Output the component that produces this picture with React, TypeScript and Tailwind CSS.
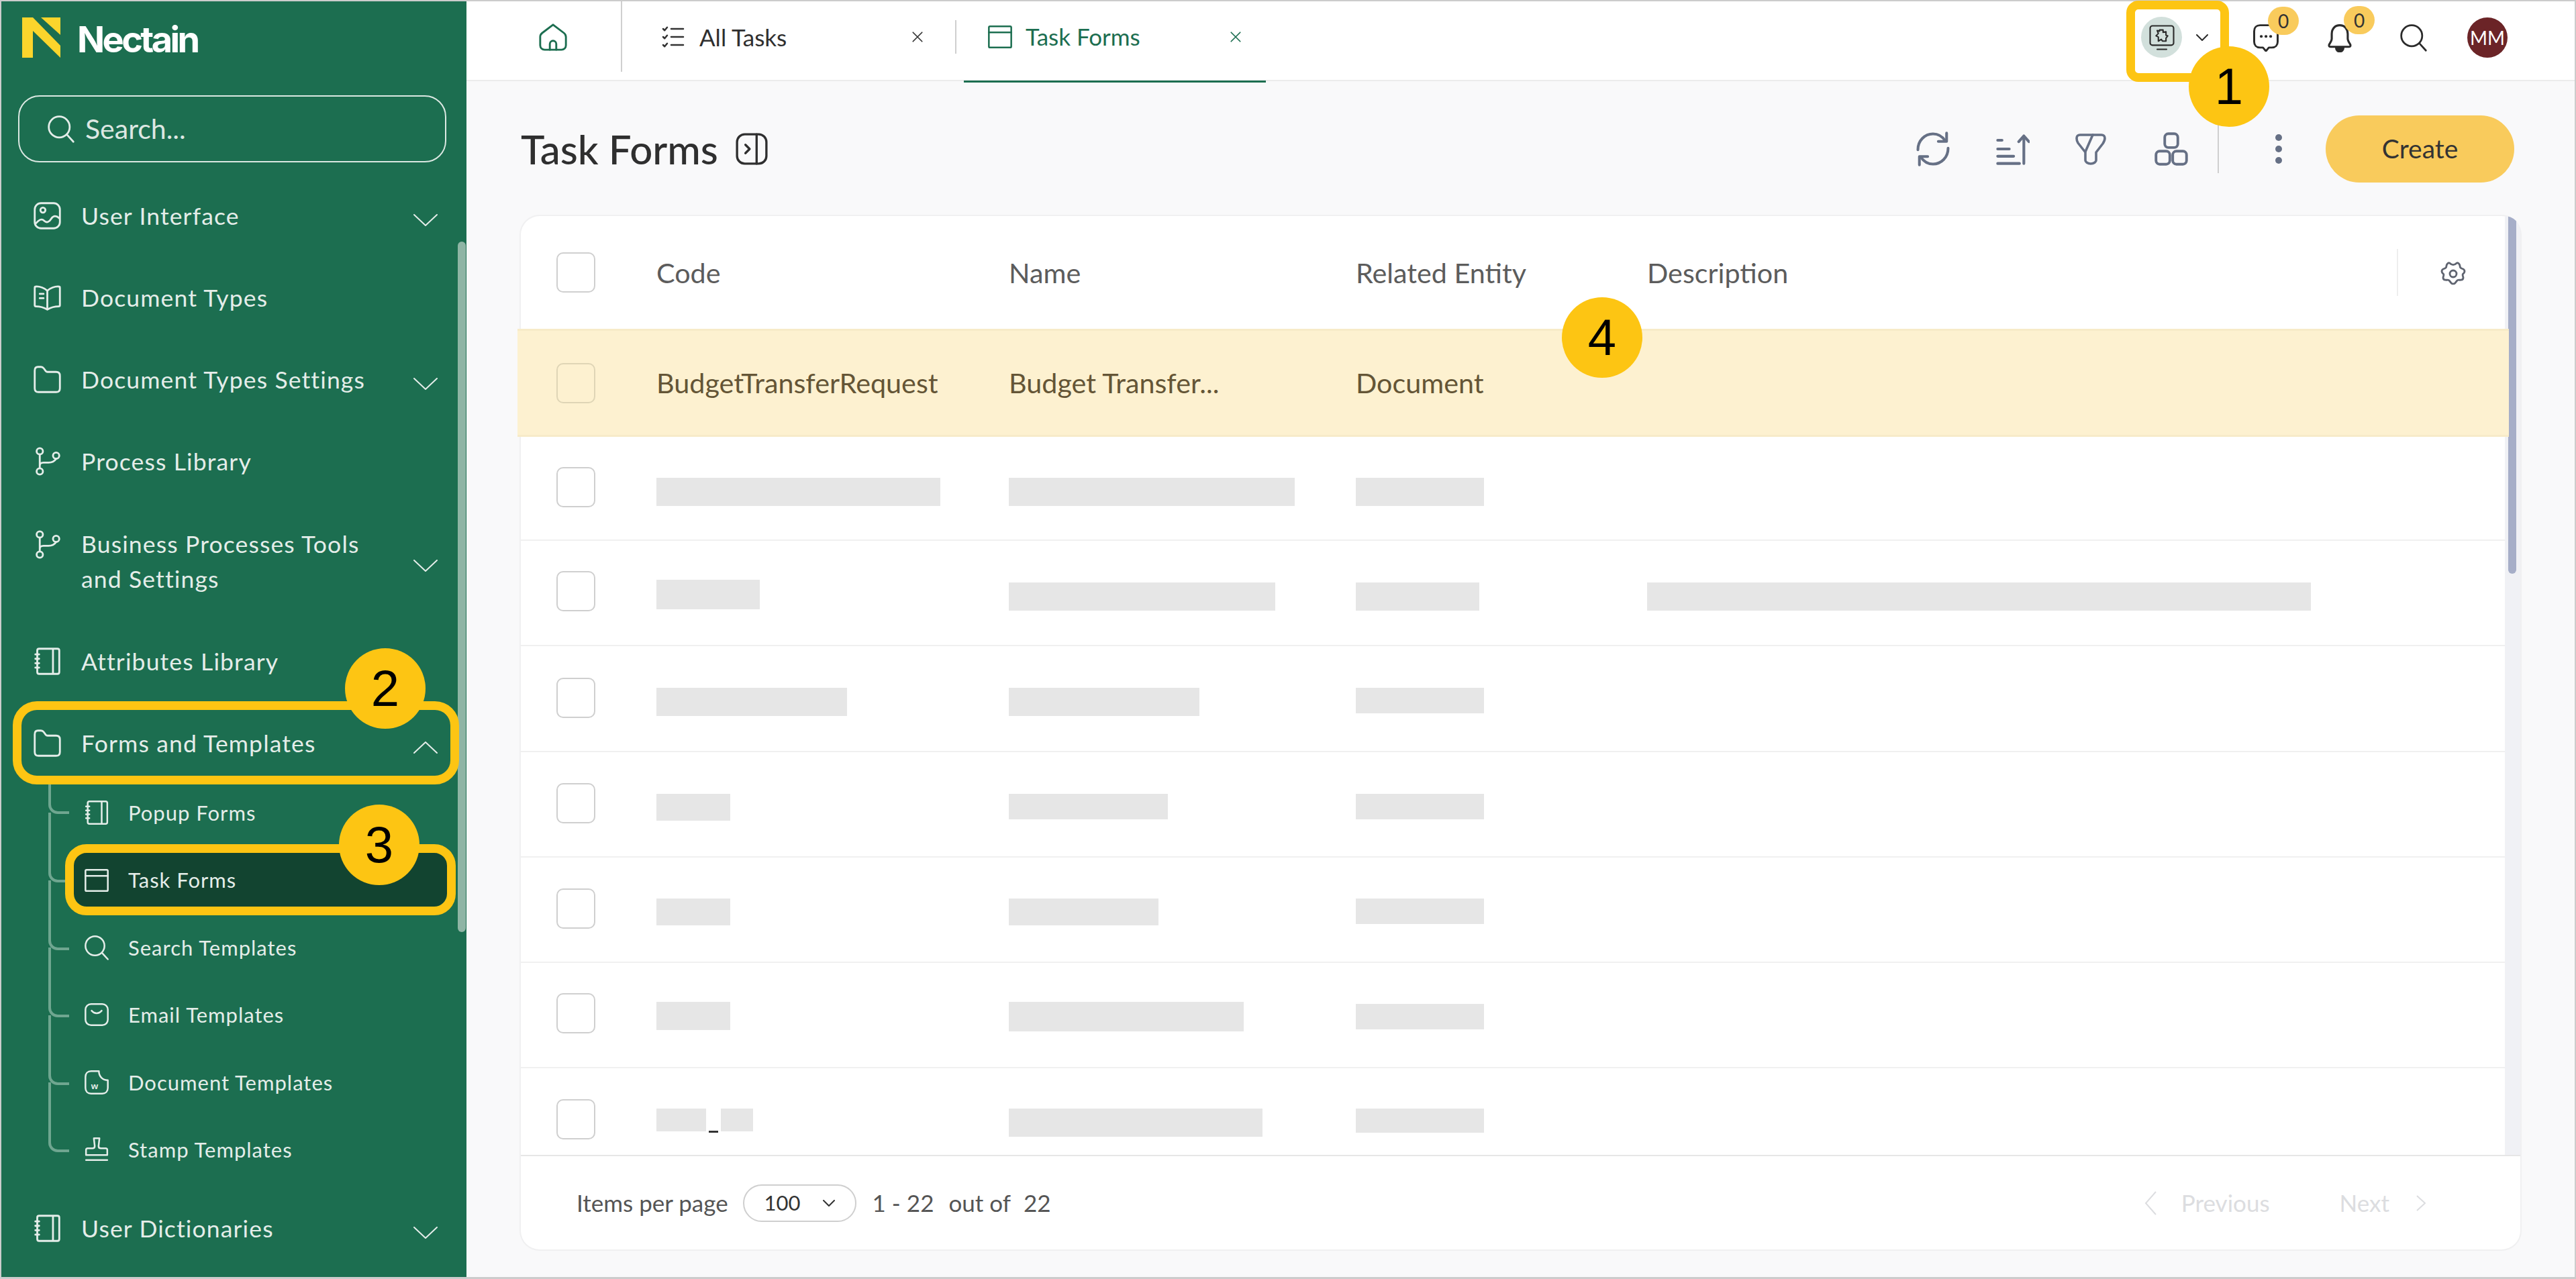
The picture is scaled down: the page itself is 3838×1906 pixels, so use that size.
import type { ReactNode } from "react";

type IconProps = { className?: string };

function Svg({ className, children, sw = 1.5, vb = "0 0 24 24" }: IconProps & { children: ReactNode; sw?: number; vb?: string }) {
  return (
    <svg viewBox={vb} fill="none" stroke="currentColor" strokeWidth={sw} strokeLinecap="round" strokeLinejoin="round" className={className}>
      {children}
    </svg>
  );
}

const ImageIcon = (p: IconProps) => (
  <Svg {...p}>
    <rect x="2" y="2" width="20" height="20" rx="5" />
    <circle cx="8.5" cy="7.5" r="2" />
    <path d="M2.5 18.5c3-3.5 5-4.5 7-2.5s4 1 5.500-1.500 4-3 6.500-.5" />
  </Svg>
);
const BookIcon = (p: IconProps) => (
  <Svg {...p}>
    <path d="M12 21.500V6.500C10 4.500 6 3 3 3.200c-.6 0-1 .5-1 1V18c0 .6.4 1 1 1 3.500 0 6.500 1 9 2.500 2.500-1.500 5.500-2.500 9-2.500.6 0 1-.4 1-1V4.200c0-.5-.4-1-1-1C18 3 14 4.500 12 6.500" />
    <path d="M6 9h3M6 12.500h3" />
  </Svg>
);
const FolderIcon = (p: IconProps) => (
  <Svg {...p}>
    <path d="M2 5c0-2 1-3 2.500-3H7c1 0 1.600.4 2.200 1.200l1.500 2.100c.4.500.8.700 1.500.700H19c2 0 3 1 3 3v10c0 2-1 3-3 3H5c-2 0-3-1-3-3V5Z" />
  </Svg>
);
const BranchIcon = (p: IconProps) => (
  <Svg {...p}>
    <circle cx="6" cy="4" r="2.500" />
    <circle cx="19" cy="7.500" r="2.500" />
    <circle cx="6" cy="20" r="2.500" />
    <path d="M6 6.500v11M6 15.500c0-2 1-2.500 3-2.500h4c3 0 5-1.500 6-3" />
  </Svg>
);
const NotebookIcon = (p: IconProps) => (
  <Svg {...p}>
    <path d="M4 3.500C4 2.500 4.600 2 5.500 2H20c1 0 1.500.5 1.500 1.500v17c0 1-.5 1.500-1.500 1.500H5.500C4.600 22 4 21.500 4 20.500V3.500ZM16.500 2v20" />
    <path d="M2.500 6.500h3M2.500 10h3M2.500 13.500h3M2.500 17h3" />
  </Svg>
);
const WindowIcon = (p: IconProps) => (
  <Svg {...p}>
    <rect x="2" y="2.500" width="20" height="19" rx="1" />
    <path d="M2 8h20" />
  </Svg>
);
const SearchIcon = (p: IconProps) => (
  <Svg {...p}>
    <circle cx="10.500" cy="10.500" r="8.500" />
    <path d="m17 17 5 5.500" />
  </Svg>
);
const MailIcon = (p: IconProps) => (
  <Svg {...p}>
    <rect x="2" y="2.500" width="20" height="19" rx="5" />
    <path d="M7.500 8.500c2.500 3 6.500 3 9 0" />
  </Svg>
);
const DocWIcon = (p: IconProps) => (
  <Svg {...p}>
    <path d="M14 2H7C4 2 2 4 2 7v10c0 3 2 5 5 5h10c3 0 5-2 5-5v-7c-4.500 0-8-3-8-8Z" />
    <text x="7" y="18" fontSize="8" fontWeight="700" fontFamily="Liberation Sans, sans-serif" fill="currentColor" stroke="none">w</text>
  </Svg>
);
const StampIcon = (p: IconProps) => (
  <Svg {...p}>
    <path d="M9.500 2h5l-.8 7c0 1.500 1 2 2 2H20c1 0 1.500.5 1.500 1.500V17h-19v-4.500c0-1 .5-1.500 1.500-1.500h4.300c1 0 2-.5 2-2l-.8-7Z" />
    <path d="M2.500 21.500h19" />
  </Svg>
);
const ChevronDown = (p: IconProps) => (
  <Svg {...p} vb="0 0 36 18" sw={2}>
    <path d="m1 1 17 16L35 1" />
  </Svg>
);
const ChevronUp = (p: IconProps) => (
  <Svg {...p} vb="0 0 36 18" sw={2}>
    <path d="m1 17 17-16 17 16" />
  </Svg>
);
const SmallChevron = (p: IconProps) => (
  <Svg {...p} vb="0 0 18 10" sw={2}>
    <path d="m1 1 8 8 8-8" />
  </Svg>
);
const HomeIcon = (p: IconProps) => (
  <Svg {...p}>
    <path d="M12 2.500 3.500 9C2.500 9.800 2 10.600 2 12v6.500C2 20.500 3.500 22 5.500 22h13c2 0 3.500-1.500 3.500-3.500V12c0-1.400-.5-2.200-1.500-3L12 2.500Z" />
    <path d="M9.500 22v-4.500a2.500 2.500 0 0 1 5 0V22" />
  </Svg>
);
const TasksIcon = (p: IconProps) => (
  <Svg {...p} sw={1.7}>
    <path d="m2 4 1.500 1.500L6 2.500M2 12l1.500 1.500L6 10.500M2 20l1.500 1.500L6 18.500" />
    <path d="M10 4h12M10 12h12M10 20h12" />
  </Svg>
);
const CloseIcon = (p: IconProps) => (
  <Svg {...p} vb="0 0 16 16" sw={1.5}>
    <path d="m2 2 12 12M14 2 2 14" />
  </Svg>
);
const PanelIcon = (p: IconProps) => (
  <Svg {...p} sw={1.6}>
    <rect x="1.500" y="1.500" width="21" height="21" rx="5.500" />
    <path d="M15.500 1.500v21M7.500 9l3 3-3 3" />
  </Svg>
);
const ChatIcon = (p: IconProps) => (
  <Svg {...p} sw={1.7}>
    <path d="M7 1.500h10c3 0 5 2 5 5v9c0 3-2 5-5 5h-2.500L12 23.500 9.500 20.500H7c-3 0-5-2-5-5v-9c0-3 2-5 5-5Z" />
    <path d="M8 11h.1M12 11h.1M16 11h.1" strokeWidth={2.400} />
  </Svg>
);
const BellIcon = (p: IconProps) => (
  <Svg {...p} sw={1.7}>
    <path d="M12 2C8 2 5.500 5 5.500 9v4c0 1.500-1 3-2 4.500-.6 1-.2 2 1 2h15c1.200 0 1.600-1 1-2-1-1.500-2-3-2-4.500V9c0-4-2.500-7-6.500-7Z" />
    <path d="M9 20c0 2 1.300 3.300 3 3.300s3-1.300 3-3.300" fill="currentColor" />
  </Svg>
);
const MonitorIcon = (p: IconProps) => (
  <Svg {...p} sw={1.2}>
    <rect x="2" y="2" width="20" height="16.500" rx="2" />
    <path d="M8 22h8" />
    <path d="M10 5.500h3v2l2.500-.5v3l1.500.5-1.500 2v2.500h-3l-1-1.500-2.500 1.500v-3.500l-2-1 2-2-1-2.500 2 .5V5.500Z" />
  </Svg>
);
const RefreshIcon = (p: IconProps) => (
  <Svg {...p} sw={1.8}>
    <path d="M2 12.500C2 6.500 6.500 2 12 2c3.500 0 6 1.500 8 4.500M22 11.500C22 17.500 17.500 22 12 22c-3.500 0-6-1.500-8-4.500" />
    <path d="M21 1.500v5.500h-5.500M3 22.500V17h5.500" />
  </Svg>
);
const SortIcon = (p: IconProps) => (
  <Svg {...p} sw={1.900}>
    <path d="M2 6h3M2 12h8M2 17h11M2 22h15" />
    <path d="M20 22V3M16.500 7 20 3l3.500 4" />
  </Svg>
);
const FilterIcon = (p: IconProps) => (
  <Svg {...p} sw={1.800}>
    <path d="M4 1.500h16c1.500 0 2.500 1 2.500 2.500 0 1.500-.5 2.500-1.500 4l-5 6.500v6c0 1-1.500 2.500-4 2.500s-4-1.500-4-2.500v-6L2.500 7.500C1.800 6.500 1.500 5.500 1.500 4 1.500 2.500 2.500 1.500 4 1.500Z" />
    <path d="M13.500 1.500 8 14" />
  </Svg>
);
const AppsIcon = (p: IconProps) => (
  <Svg {...p} sw={1.800}>
    <rect x="7.500" y="1.500" width="9" height="9.500" rx="2.500" />
    <rect x="1.500" y="13.500" width="9.500" height="9" rx="2.500" />
    <rect x="13" y="13.500" width="9.500" height="9" rx="2.500" />
  </Svg>
);
const GearIcon = (p: IconProps) => (
  <Svg {...p} sw={1.700}>
    <circle cx="12" cy="12" r="3" />
    <path d="M9 2.500c1 1 2 1.500 3 1.500s2-.5 3-1.500c1-.6 2 .2 2.500 1 .6 1 .5 2 .8 2.800.5.8 1.500 1.200 2.700 1.500 1 .5 1.500 1.700 1 2.800-.4 1-1.200 1.400-1.500 2-.3.7.4 1.800.5 2.800 0 1.500-1 2-2 2.100-1.200.2-2.200-.2-3 .2-1 .5-1.500 2-2.500 2.800-1 .6-2 .6-3 0-1-.8-1.500-2.300-2.500-2.800-.8-.4-1.800 0-3-.2-1-.1-2-.6-2-2.100.1-1 .8-2.100.5-2.800-.3-.6-1.100-1-1.500-2-.5-1.100 0-2.300 1-2.800C4.200 7.500 5.200 7.100 5.700 6.300 6 5.500 5.900 4.500 6.500 3.500c.5-.8 1.500-1.600 2.500-1Z" />
  </Svg>
);

type NavItem = { label: ReactNode; icon: (p: IconProps) => ReactNode; chevron?: "up" | "down"; tall?: boolean };

const topNav: NavItem[] = [
  { label: "User Interface", icon: ImageIcon, chevron: "down" },
  { label: "Document Types", icon: BookIcon },
  { label: "Document Types Settings", icon: FolderIcon, chevron: "down" },
  { label: "Process Library", icon: BranchIcon },
  { label: <>Business Processes Tools<br />and Settings</>, icon: BranchIcon, chevron: "down", tall: true },
  { label: "Attributes Library", icon: NotebookIcon },
  { label: "Forms and Templates", icon: FolderIcon, chevron: "up" },
];

const subNav = [
  { label: "Popup Forms", icon: NotebookIcon },
  { label: "Task Forms", icon: WindowIcon, active: true },
  { label: "Search Templates", icon: SearchIcon },
  { label: "Email Templates", icon: MailIcon },
  { label: "Document Templates", icon: DocWIcon },
  { label: "Stamp Templates", icon: StampIcon },
];

function NavRow({ item }: { item: NavItem }) {
  const Icon = item.icon;
  return (
    <div className={`flex items-center pl-[46px] ${item.tall ? "h-[176px]" : "h-[122px]"}`}>
      <Icon className={`h-[45px] w-[45px] shrink-0 ${item.tall ? "-mt-[52px]" : "-mt-[2px]"}`} />
      <span className="ml-[28px] flex-1 text-[35.5px] leading-[52px] tracking-[1.15px] text-[#e4ede9]">{item.label}</span>
      {item.chevron === "down" && <ChevronDown className="mt-[12px] mr-[43px] h-[18px] w-[36px] shrink-0" />}
      {item.chevron === "up" && <ChevronUp className="mt-[12px] mr-[43px] h-[18px] w-[36px] shrink-0" />}
    </div>
  );
}

function Sidebar() {
  return (
    <aside className="relative flex w-[693px] shrink-0 flex-col overflow-hidden bg-[#1c6e50] text-[#e4ede9]">
      <div className="flex h-[140px] items-start pl-[31px] pt-[24px]">
        <svg viewBox="0 0 57 60" className="h-[60px] w-[57px]">
          <path d="M0 0h16l41 42v18L16 20v40H0Z" fill="#fbd52c" />
          <path d="M28 0h29v26Z" fill="#fbd52c" />
        </svg>
        <span className="ml-[25px] font-['Inter',sans-serif] text-[54px] font-bold leading-[66px] tracking-[-3.6px] text-white">Nectain</span>
      </div>
      <div className="mx-[25px] flex h-[100px] w-[638px] items-center rounded-[32px] border-2 border-[#dbe8e2] pl-[40px]">
        <SearchIcon className="h-[44px] w-[44px]" />
        <span className="ml-[14px] text-[41px] text-[#dce7e2]">Search...</span>
      </div>
      <nav className="flex-1 pt-[19px]">
        {topNav.map((item, i) => (
          <NavRow key={i} item={item} />
        ))}
        <div className="-mt-[8px] mb-[7px]">
          {subNav.map((s, i) => {
            const Icon = s.icon;
            return (
              <div key={s.label} className="relative flex h-[100.4px] items-center pl-[122px]">
                <span className={`absolute left-[70px] w-[31px] rounded-bl-[14px] border-b-[4px] border-l-[4px] border-[#6fa690] ${i === 0 ? "-top-[2px] h-[54px]" : "-top-[50px] h-[104px]"}`} />
                {s.active && <span className="absolute left-[108px] top-[8px] h-[82px] w-[556px] rounded-[20px] bg-[#124430]" />}
                <Icon className="relative h-[40px] w-[40px] shrink-0" />
                <span className="relative ml-[27px] text-[31px] tracking-[1px] text-[#e4ede9]">{s.label}</span>
              </div>
            );
          })}
        </div>
        <NavRow item={{ label: "User Dictionaries", icon: NotebookIcon, chevron: "down" }} />
      </nav>
      <div className="absolute right-[1px] top-[358px] h-[1029px] w-[12px] rounded-full bg-[#8fb5a5]" />
    </aside>
  );
}

function TabBar() {
  return (
    <header className="flex h-[119px] shrink-0 border-b-2 border-[#ececec] bg-white">
      <div className="flex h-[105px] w-[232px] items-center border-r-2 border-[#cfcfcf] pl-[106px]">
        <HomeIcon className="h-[46px] w-[46px] text-[#1c6e50]" />
      </div>
      <div className="mt-[28px] flex h-[50px] w-[498px] items-center border-r-2 border-[#cfcfcf] pl-[58px]">
        <TasksIcon className="h-[36px] w-[36px] text-[#333]" />
        <span className="ml-[21px] flex-1 text-[35px] text-[#2f2f2f]">All Tasks</span>
        <CloseIcon className="mr-[47px] h-[18px] w-[18px] text-[#333]" />
      </div>
      <div className="relative ml-[11px] flex h-[121px] w-[450px] items-center pb-[16px] pl-[34px] text-[#1c6e50]">
        <WindowIcon className="h-[40px] w-[40px]" />
        <span className="ml-[18px] flex-1 text-[35px]">Task Forms</span>
        <CloseIcon className="mr-[36px] h-[18px] w-[18px]" />
        <span className="absolute inset-x-0 bottom-0 h-[3px] bg-[#1c6e50]" />
      </div>
      <div className="ml-auto flex h-[105px] items-center pr-[100px] pt-[2px] text-[#2b2b2b]">
        <div className="flex h-[61px] w-[61px] items-center justify-center rounded-full bg-[#d2e0dc]">
          <MonitorIcon className="h-[42px] w-[42px]" />
        </div>
        <SmallChevron className="ml-[21px] h-[10px] w-[18px]" />
        <div className="relative ml-[65px]">
          <ChatIcon className="h-[42px] w-[42px]" />
          <Badge className="-right-[28px] -top-[25px]" />
        </div>
        <div className="relative ml-[67px]">
          <BellIcon className="h-[44px] w-[44px]" />
          <Badge className="-right-[30px] -top-[25px]" />
        </div>
        <SearchIcon className="ml-[66px] h-[44px] w-[44px]" />
        <div className="ml-[58px] flex h-[60px] w-[60px] items-center justify-center rounded-full bg-[#6b2427] text-[28px] text-white">MM</div>
      </div>
    </header>
  );
}

function Badge({ className }: { className: string }) {
  return (
    <span className={`absolute flex h-[42px] w-[46px] items-center justify-center rounded-full bg-[#f9cb5c] text-[28px] text-[#333] ${className}`}>0</span>
  );
}

function Toolbar() {
  return (
    <div className="flex h-[201px] shrink-0 items-center pl-[81px] pr-[90px]">
      <h1 className="text-[60px] font-medium leading-none text-[#2f2f2f]">Task Forms</h1>
      <PanelIcon className="ml-[25px] h-[50px] w-[50px] text-[#2f2f2f]" />
      <div className="ml-auto flex items-center text-[#667085]">
        <RefreshIcon className="-ml-[2px] h-[54px] w-[54px]" />
        <SortIcon className="ml-[65px] h-[52px] w-[52px]" />
        <FilterIcon className="ml-[67px] h-[52px] w-[48px]" />
        <AppsIcon className="ml-[70px] h-[52px] w-[52px]" />
        <span className="ml-[43px] h-[72px] w-[2px] bg-[#cfcfcf]" />
        <div className="ml-[84px] flex flex-col gap-[7px]">
          <span className="h-[10px] w-[10px] rounded-full bg-[#667085]" />
          <span className="h-[10px] w-[10px] rounded-full bg-[#667085]" />
          <span className="h-[10px] w-[10px] rounded-full bg-[#667085]" />
        </div>
        <button className="ml-[65px] h-[100px] w-[281px] rounded-full bg-[#f9cb5c] text-[39px] text-[#333]">Create</button>
      </div>
    </div>
  );
}

function Checkbox({ tone = "border-[#cfcfcf] bg-white" }: { tone?: string }) {
  return <span className={`block h-[60px] w-[58px] shrink-0 rounded-[10px] border-2 ${tone}`} />;
}

type Bar = { top: number; w: number; h: number };
type SkeletonRow = { h: number; code: Bar[]; name: Bar; rel: Bar; desc?: Bar; checkTop: number };

const skeletonRows: SkeletonRow[] = [
  { h: 155, checkTop: 45, code: [{ top: 61, w: 423, h: 42 }], name: { top: 61, w: 426, h: 42 }, rel: { top: 61, w: 191, h: 42 } },
  { h: 157, checkTop: 45, code: [{ top: 58, w: 154, h: 44 }], name: { top: 62, w: 397, h: 42 }, rel: { top: 62, w: 184, h: 42 }, desc: { top: 62, w: 989, h: 42 } },
  { h: 158, checkTop: 47, code: [{ top: 62, w: 284, h: 42 }], name: { top: 62, w: 284, h: 42 }, rel: { top: 62, w: 191, h: 38 } },
  { h: 157, checkTop: 46, code: [{ top: 62, w: 110, h: 40 }], name: { top: 62, w: 237, h: 38 }, rel: { top: 62, w: 191, h: 38 } },
  { h: 157, checkTop: 46, code: [{ top: 61, w: 110, h: 40 }], name: { top: 61, w: 223, h: 40 }, rel: { top: 61, w: 191, h: 38 } },
  { h: 157, checkTop: 45, code: [{ top: 58, w: 110, h: 42 }], name: { top: 58, w: 350, h: 44 }, rel: { top: 61, w: 191, h: 38 } },
  { h: 129, checkTop: 46, code: [{ top: 60, w: 74, h: 34 }, { top: 60, w: 48, h: 34 }], name: { top: 60, w: 378, h: 42 }, rel: { top: 60, w: 191, h: 36 } },
];

function BarBlock({ bar }: { bar: Bar }) {
  return <div className="bg-[#e6e6e6]" style={{ marginTop: bar.top, width: bar.w, height: bar.h }} />;
}

function Table() {
  return (
    <div className="min-w-0 flex-1">
      <div className="flex h-[168px] items-center pl-[53px] text-[41.3px] text-[#5c5c5c]">
        <Checkbox />
        <span className="ml-[91px] mt-[2px] w-[525px]">Code</span>
        <span className="mt-[2px] w-[517px]">Name</span>
        <span className="mt-[2px] w-[434px]">Related Entity</span>
        <span className="mt-[2px] flex-1">Description</span>
        <span className="h-[70px] w-[2px] bg-[#eeeeee]" />
        <GearIcon className="ml-[62px] mr-[57px] mt-[3px] h-[40px] w-[40px] text-[#5f6470]" />
      </div>
      <div className="relative z-10 -ml-[5px] -mr-[6px] flex h-[161px] items-center border-y-[3px] border-[#f7ebc8] bg-[#fdf1d0] pl-[58px] text-[41.3px] text-[#645536]">
        <Checkbox tone="border-[#dfd5b6] bg-transparent" />
        <span className="ml-[91px] w-[525px]">BudgetTransferRequest</span>
        <span className="w-[517px]">Budget Transfer...</span>
        <span>Document</span>
      </div>
      {skeletonRows.map((row, i) => (
        <div
          key={i}
          className={`flex items-start pl-[53px] ${i < skeletonRows.length - 1 ? "border-b-2 border-[#f0f0f0]" : ""}`}
          style={{ height: row.h }}
        >
          <div className="shrink-0" style={{ marginTop: row.checkTop }}>
            <Checkbox />
          </div>
          <div className="ml-[91px] flex w-[525px] shrink-0 items-start">
            {row.code.map((b, j) => (
              <div key={j} className="flex items-start">
                {j > 0 && <span className="mx-[4px] mt-[93px] h-[3px] w-[14px] bg-[#333]" />}
                <BarBlock bar={b} />
              </div>
            ))}
          </div>
          <div className="w-[517px] shrink-0">
            <BarBlock bar={row.name} />
          </div>
          <div className="w-[434px] shrink-0">
            <BarBlock bar={row.rel} />
          </div>
          {row.desc && <BarBlock bar={row.desc} />}
        </div>
      ))}
    </div>
  );
}

function Footer() {
  return (
    <div className="flex h-[141px] shrink-0 items-center border-t-2 border-[#e6e6e6] pl-[83px] pr-[141px] text-[35px] text-[#555]">
      <span>Items per page</span>
      <div className="ml-[22px] flex h-[56px] w-[169px] items-center rounded-[28px] border-2 border-[#cfcfcf] pl-[30px] text-[31px] text-[#333]">
        <span>100</span>
        <SmallChevron className="ml-[33px] h-[10px] w-[18px]" />
      </div>
      <span className="ml-[24px]">1 - 22</span>
      <span className="ml-[22px]">out of</span>
      <span className="ml-[19px]">22</span>
      <div className="ml-auto flex items-center text-[#dcdde0]">
        <svg viewBox="0 0 18 36" fill="none" stroke="currentColor" strokeWidth={2} className="h-[36px] w-[18px]">
          <path d="M17 1 2 18l15 17" />
        </svg>
        <span className="ml-[37px]">Previous</span>
        <span className="ml-[104px]">Next</span>
        <svg viewBox="0 0 14 24" fill="none" stroke="currentColor" strokeWidth={2} className="ml-[40px] h-[24px] w-[14px]">
          <path d="m1 1 12 11L1 23" />
        </svg>
      </div>
    </div>
  );
}

function Marker({ n, className }: { n: number; className: string }) {
  return (
    <div className={`absolute z-30 flex h-[120px] w-[120px] items-center justify-center rounded-full bg-[#fdc513] font-['Liberation_Sans',sans-serif] text-[76px] leading-none text-black ${className}`}>
      {n}
    </div>
  );
}

export default function App() {
  return (
    <div className="relative h-[1906px] w-[3838px] overflow-hidden bg-[#cccccc] font-['Lato',sans-serif]">
      <div className="flex h-[1906px] pb-[3px] pl-[2px] pr-[2px] pt-[2px]">
        <Sidebar />
        <main className="flex min-w-0 flex-1 flex-col bg-[#f9f9fa]">
          <TabBar />
          <Toolbar />
          <section className="ml-[81px] mr-[81px] flex h-[1540px] flex-col rounded-[28px] bg-white shadow-[0_0_0_2px_#f0f0f1]">
            <div className="flex h-[1399px]">
              <Table />
              <div className="w-[23px] shrink-0 overflow-hidden rounded-tr-[28px] bg-[#f0f1f5] pl-[5px]">
                <div className="h-[533px] w-[12px] rounded-b-[6px] bg-[#a6aec8]" />
              </div>
            </div>
            <Footer />
          </section>
        </main>
      </div>

      <div className="absolute left-[3168px] top-[1px] z-20 h-[121px] w-[153px] rounded-[18px] border-[13px] border-[#fdc513]" />
      <div className="absolute left-[19px] top-[1045px] z-20 h-[124px] w-[665px] rounded-[36px] border-[13px] border-[#fdc513]" />
      <div className="absolute left-[97px] top-[1258px] z-20 h-[106px] w-[582px] rounded-[32px] border-[13px] border-[#fdc513]" />
      <Marker n={1} className="left-[3261px] top-[69px]" />
      <Marker n={2} className="left-[514px] top-[966px]" />
      <Marker n={3} className="left-[505px] top-[1199px]" />
      <Marker n={4} className="left-[2327px] top-[443px]" />
    </div>
  );
}
